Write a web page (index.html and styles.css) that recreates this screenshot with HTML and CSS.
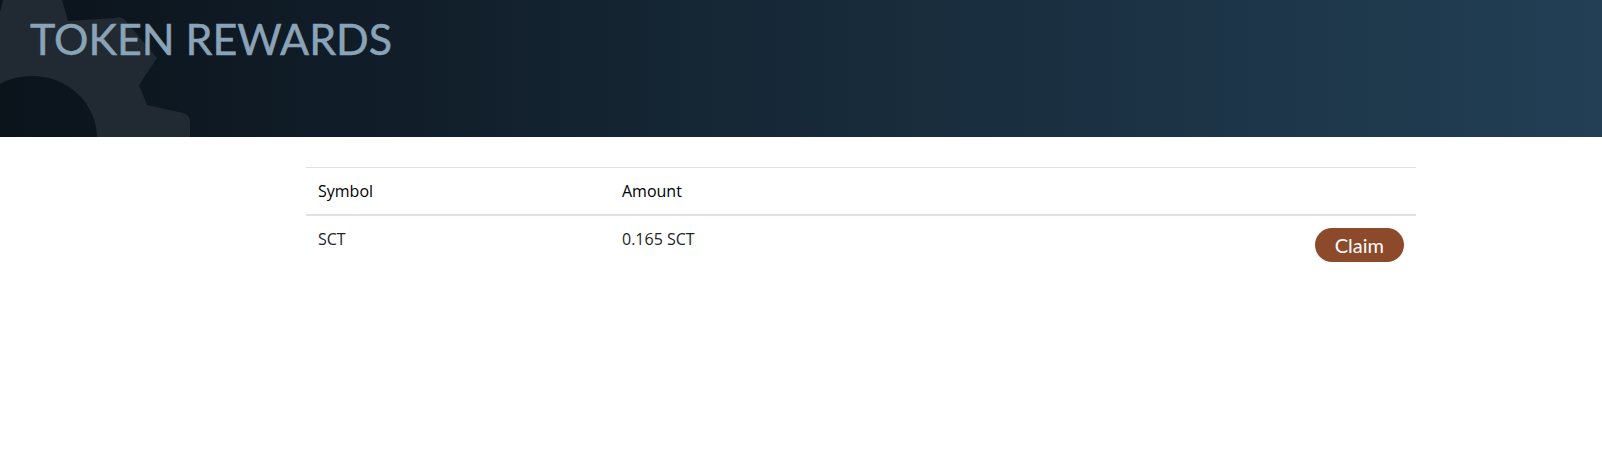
FILE: index.html
```html
<!DOCTYPE html>
<html lang="en">
<head>
    <meta charset="UTF-8">
    <meta name="viewport" content="width=device-width, initial-scale=1.0">
    <title>Token Rewards</title>
    <link rel="stylesheet" href="styles.css">
</head>
<body>
    <header class="page-header">
        <svg class="gear" viewBox="0 0 200 137" width="200" height="137" aria-hidden="true">
            <path fill-rule="evenodd" d="M0 12 L3 0 L62 0 L68 21 L115 18 Q121 16 125 20 L157 58 L139 85 L147 105 L183 113 Q190 115 190 122 L190 137 L0 137 Z M97 137 A65 62 0 0 0 32 76 Q14 76 0 84 L0 137 Z"/>
        </svg>
        <h1 class="page-title">TOKEN REWARDS</h1>
    </header>

    <div class="content">
        <table class="rewards">
            <thead>
                <tr>
                    <th class="col-symbol">Symbol</th>
                    <th class="col-amount">Amount</th>
                    <th></th>
                </tr>
            </thead>
            <tbody>
                <tr>
                    <td>SCT</td>
                    <td>0.165 SCT</td>
                    <td class="col-action"><button class="claim-btn">Claim</button></td>
                </tr>
            </tbody>
        </table>
    </div>
</body>
</html>
```

FILE: styles.css
```css
* {
    box-sizing: border-box;
}

body {
    margin: 0;
    background-color: #fff;
    color: #212529;
    font-family: 'Open Sans', sans-serif;
    font-size: 16px;
}

.page-header {
    position: relative;
    height: 137px;
    overflow: hidden;
    padding: 13px 30px 0;
    background: linear-gradient(to right, #0b131b 0%, #223f55 100%);
}

.gear {
    position: absolute;
    left: 0;
    top: 0;
    fill: #212a32;
}

.page-title {
    position: relative;
    margin: 0;
    color: #8ba3b7;
    font-family: Lato, sans-serif;
    font-size: 43px;
    font-weight: 400;
    line-height: 52px;
    -webkit-text-stroke: 0.5px #8ba3b7;
}

.content {
    width: 1110px;
    margin: 30px 0 0 306px;
}

.rewards {
    width: 100%;
    border-collapse: collapse;
}

.rewards th,
.rewards td {
    padding: 12px;
    line-height: 22px;
    text-align: left;
    vertical-align: top;
}

.rewards th {
    color: #000;
    font-weight: 500;
    border-top: 1px solid #dee2e6;
    border-bottom: 2px solid #dee2e6;
}

.col-symbol {
    width: 304px;
}

.rewards td.col-action {
    text-align: right;
}

.claim-btn {
    height: 34px;
    padding: 0 20px;
    border: none;
    border-radius: 17px;
    background-color: #8d4a2b;
    color: #fff;
    font-family: Lato, sans-serif;
    font-size: 20px;
    vertical-align: top;
}
```
